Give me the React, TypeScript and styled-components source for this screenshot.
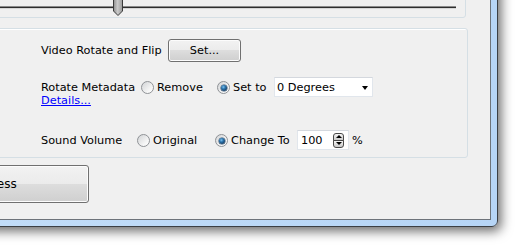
import styled, { createGlobalStyle } from "styled-components";

const GlobalStyle = createGlobalStyle`
  html, body {
    margin: 0;
    padding: 0;
    background: #fff;
    overflow: hidden;
  }
  body {
    font-family: "DejaVu Sans", Tahoma, sans-serif;
    font-size: 11.3px;
    color: #000;
  }
`;

const Screen = styled.div`
  width: 520px;
  height: 250px;
  overflow: hidden;
  background: #fff;
`;

const Window = styled.div`
  box-sizing: border-box;
  width: 638px;
  margin: -48px 0 0 -140px;
  padding: 6px;
  border: 1px solid #3b3f44;
  border-radius: 0 0 6px 0;
  background: linear-gradient(90deg, #c4def8, #b6d5f6);
  box-shadow: 3px 4px 12px rgba(0, 0, 0, 0.6);
`;

const Client = styled.div`
  display: flex;
  flex-direction: column;
  align-items: flex-start;
  padding: 10px 22px 16px 12px;
  border: 1px solid #6d737a;
  background: #f0f0f0;
`;

const GroupBox = styled.div<{ $mr?: number }>`
  align-self: stretch;
  border: 1px solid #d5dfe5;
  border-radius: 3px;
  box-shadow: inset 1px 1px 0 #fff;
  margin-right: ${(p) => p.$mr ?? 0}px;
`;

const SliderGroup = styled(GroupBox)`
  padding: 35px 9px 8px 10px;
`;

const Track = styled.div`
  position: relative;
  height: 3px;
  background: linear-gradient(#8a8a8a 0 1px, #2e2e2e 1px 2px, #d6d6d6 2px);
`;

const Thumb = styled.svg<{ $left: number }>`
  position: absolute;
  top: -11px;
  left: ${(p) => p.$left}px;
`;

const OptionsGroup = styled(GroupBox)`
  display: flex;
  flex-direction: column;
  margin-top: 10px;
  padding: 10px 0 7px 160px;
`;

const Row = styled.div<{ $mb?: number; $h?: number }>`
  display: flex;
  align-items: ${(p) => (p.$h ? "center" : "flex-start")};
  height: ${(p) => (p.$h ? `${p.$h}px` : "auto")};
  margin-bottom: ${(p) => p.$mb ?? 0}px;
`;

const Label = styled.span<{ $w: number }>`
  flex: none;
  width: ${(p) => p.$w}px;
  line-height: 13px;
  white-space: nowrap;
`;

const LabelStack = styled.div`
  display: flex;
  flex-direction: column;
  flex: none;
  width: 100px;
  padding-top: 4px;
  line-height: 13px;
`;

const LinkText = styled.a`
  color: #0000ff;
  text-decoration: underline;
  cursor: pointer;
  white-space: nowrap;
`;

const Options = styled.div`
  display: flex;
  align-items: center;
  height: 20px;
`;

const WinButton = styled.button<{ $w: number; $h: number }>`
  box-sizing: border-box;
  flex: none;
  width: ${(p) => p.$w}px;
  height: ${(p) => p.$h}px;
  padding: 0;
  font: inherit;
  color: #000;
  border: 1px solid #707070;
  border-radius: 3px;
  background: linear-gradient(#f2f2f2 0%, #ebebeb 50%, #dddddd 50%, #cfcfcf 100%);
  box-shadow: inset 0 0 0 1px #fcfcfc;
`;

const ProcessButton = styled(WinButton)`
  margin: 7px 0 0 19px;
  font-size: 12px;
`;

const Option = styled.label<{ $w: number }>`
  display: flex;
  align-items: center;
  gap: 3px;
  flex: none;
  width: ${(p) => p.$w}px;
  white-space: nowrap;
  padding-top: 1px;
`;

const Radio = styled.span<{ $on?: boolean }>`
  position: relative;
  box-sizing: border-box;
  flex: none;
  width: 13px;
  height: 13px;
  border: 1px solid #8f9296;
  border-radius: 50%;
  background: linear-gradient(135deg, #d2d4d6, #f6f6f6 70%, #ffffff);
  &::after {
    content: "";
    display: ${(p) => (p.$on ? "block" : "none")};
    position: absolute;
    left: 2.5px;
    top: 2.5px;
    width: 6px;
    height: 6px;
    border-radius: 50%;
    background: radial-gradient(circle at 40% 35%, #7fc2ee 0, #2a74ad 35%, #12365a 80%);
    box-shadow: 0 0 0 0.5px #2b4a68;
  }
`;

const Select = styled.div`
  box-sizing: border-box;
  display: flex;
  align-items: center;
  justify-content: space-between;
  width: 99px;
  height: 20px;
  padding: 0 4px 0 2px;
  background: #fff;
  border: 1px solid #e1e6ec;
  border-top-color: #d4d8de;
`;

const Arrow = styled.span`
  width: 0;
  height: 0;
  border-left: 3.5px solid transparent;
  border-right: 3.5px solid transparent;
  border-top: 4px solid #000;
  margin-top: 1px;
`;

const Spin = styled.div`
  box-sizing: border-box;
  display: flex;
  align-items: center;
  justify-content: space-between;
  width: 52px;
  height: 20px;
  padding: 0 4px 0 3px;
  background: #fff;
  border: 1px solid #e1e6ec;
  border-top-color: #d4d8de;
`;

const Spinner = styled.div`
  display: flex;
  flex-direction: column;
`;

const SpinHalf = styled.span<{ $down?: boolean }>`
  box-sizing: border-box;
  display: flex;
  align-items: center;
  justify-content: center;
  width: 11px;
  height: 8px;
  border: 1px solid #4a4a4a;
  border-radius: ${(p) => (p.$down ? "0 0 3px 3px" : "3px 3px 0 0")};
  margin-top: ${(p) => (p.$down ? "-1px" : "0")};
  background: linear-gradient(#f6f6f6, #c9c9c9);
  &::after {
    content: "";
    width: 0;
    height: 0;
    border-left: 3px solid transparent;
    border-right: 3px solid transparent;
    ${(p) => (p.$down ? "border-top: 3px solid #000;" : "border-bottom: 3px solid #000;")}
  }
`;

const Percent = styled.span`
  margin-left: 3px;
`;

export default function App() {
  return (
    <Screen>
      <GlobalStyle />
      <Window>
        <Client>
          <SliderGroup $mr={2}>
            <Track>
              <Thumb $left={222} width="10" height="21" viewBox="0 0 10 21">
                <defs>
                  <linearGradient id="thumbFill" x1="0" x2="1" y1="0" y2="0">
                    <stop offset="0" stopColor="#8e8e8e" />
                    <stop offset="0.45" stopColor="#c9c9c9" />
                    <stop offset="1" stopColor="#9a9a9a" />
                  </linearGradient>
                </defs>
                <path
                  d="M0.5 0.5 H9.5 V16 L5 20.5 L0.5 16 Z"
                  fill="url(#thumbFill)"
                  stroke="#3a3a3a"
                  strokeWidth="1"
                />
              </Thumb>
            </Track>
          </SliderGroup>

          <OptionsGroup>
            <Row $h={23} $mb={15}>
              <Label $w={127}>Video Rotate and Flip</Label>
              <WinButton $w={73} $h={23}>
                Set...
              </WinButton>
            </Row>

            <Row $mb={23}>
              <LabelStack>
                <span>Rotate Metadata</span>
                <LinkText>Details...</LinkText>
              </LabelStack>
              <Options>
                <Option $w={76}>
                  <Radio />
                  Remove
                </Option>
                <Option $w={57}>
                  <Radio $on />
                  Set to
                </Option>
                <Select>
                  <span>0 Degrees</span>
                  <Arrow />
                </Select>
              </Options>
            </Row>

            <Row $h={20}>
              <Label $w={96}>Sound Volume</Label>
              <Option $w={78}>
                <Radio />
                Original
              </Option>
              <Option $w={82}>
                <Radio $on />
                Change To
              </Option>
              <Spin>
                <span>100</span>
                <Spinner>
                  <SpinHalf />
                  <SpinHalf $down />
                </Spinner>
              </Spin>
              <Percent>%</Percent>
            </Row>
          </OptionsGroup>

          <ProcessButton $w={190} $h={38}>
            Process
          </ProcessButton>
        </Client>
      </Window>
    </Screen>
  );
}
